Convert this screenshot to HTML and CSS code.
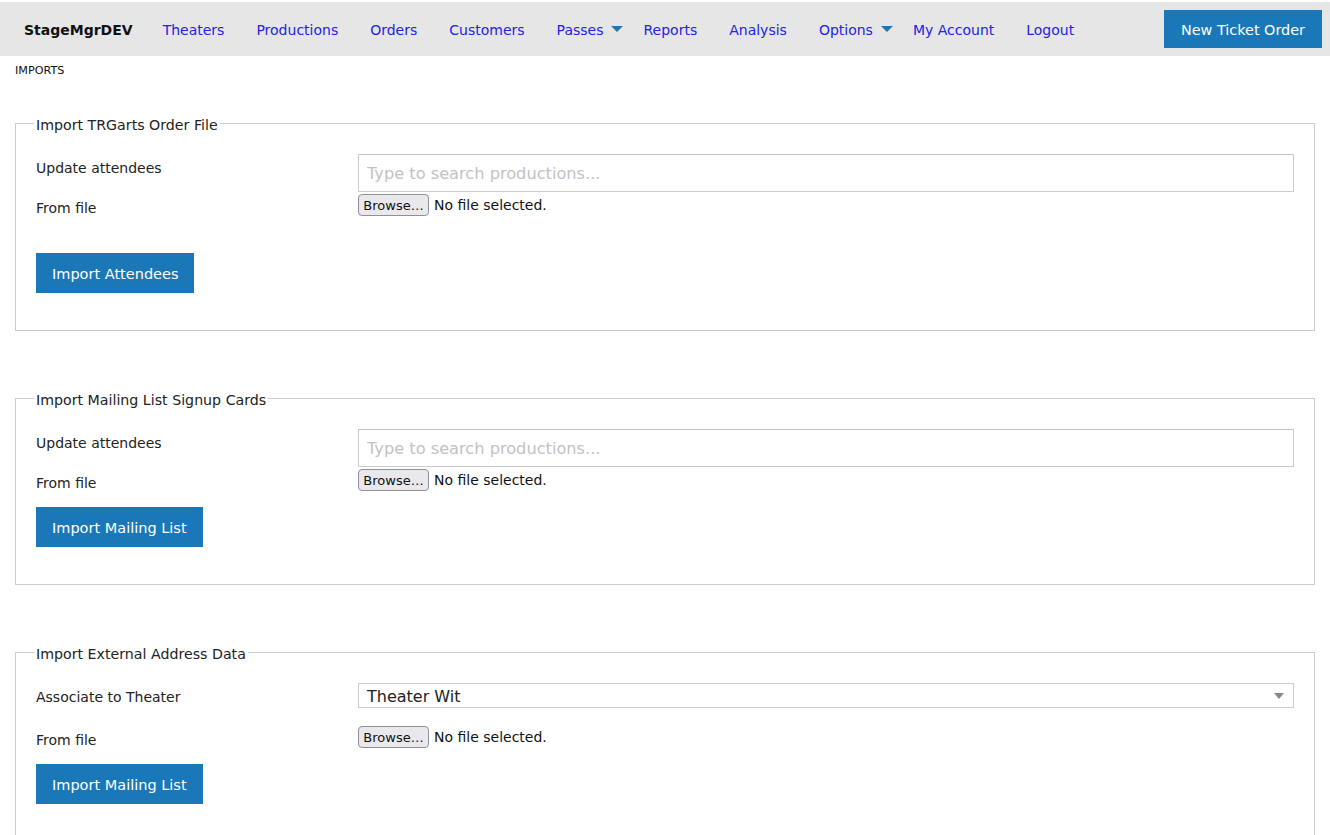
FILE: index.html
```html
<!DOCTYPE html>
<html lang="en">
<head>
  <meta charset="UTF-8" />
  <meta name="viewport" content="width=device-width, initial-scale=1.0" />
  <title>StageMgrDEV - Imports</title>
  <link rel="stylesheet" href="styles.css">
</head>
<body>
  <nav class="topbar">
    <a class="brand" href="#">StageMgrDEV</a>
    <a class="nav-link" href="#">Theaters</a>
    <a class="nav-link" href="#">Productions</a>
    <a class="nav-link" href="#">Orders</a>
    <a class="nav-link" href="#">Customers</a>
    <a class="nav-link dropdown" href="#">Passes<span class="caret"></span></a>
    <a class="nav-link" href="#">Reports</a>
    <a class="nav-link" href="#">Analysis</a>
    <a class="nav-link dropdown" href="#">Options<span class="caret"></span></a>
    <a class="nav-link" href="#">My Account</a>
    <a class="nav-link" href="#">Logout</a>
    <a class="btn btn-new" href="#">New Ticket Order</a>
  </nav>

  <div class="crumb">IMPORTS</div>

  <fieldset class="import first">
    <legend>Import TRGarts Order File</legend>
    <div class="row row-input">
      <label>Update attendees</label>
      <input type="text" class="text-input" placeholder="Type to search productions..." />
    </div>
    <div class="row">
      <label>From file</label>
      <div class="file"><button type="button" class="browse">Browse…</button><span>No file selected.</span></div>
    </div>
    <div class="spacer"></div>
    <button type="button" class="btn btn-import">Import Attendees</button>
  </fieldset>

  <fieldset class="import">
    <legend>Import Mailing List Signup Cards</legend>
    <div class="row row-input">
      <label>Update attendees</label>
      <input type="text" class="text-input" placeholder="Type to search productions..." />
    </div>
    <div class="row">
      <label>From file</label>
      <div class="file"><button type="button" class="browse">Browse…</button><span>No file selected.</span></div>
    </div>
    <button type="button" class="btn btn-import">Import Mailing List</button>
  </fieldset>

  <fieldset class="import">
    <legend>Import External Address Data</legend>
    <div class="row row-select">
      <label>Associate to Theater</label>
      <div class="select">
        <span>Theater Wit</span>
        <svg width="10" height="6" viewBox="0 0 10 6"><path d="M0 0h10L5 6z" fill="#888"/></svg>
      </div>
    </div>
    <div class="row">
      <label>From file</label>
      <div class="file"><button type="button" class="browse">Browse…</button><span>No file selected.</span></div>
    </div>
    <button type="button" class="btn btn-import">Import Mailing List</button>
  </fieldset>
</body>
</html>
```

FILE: styles.css
```css
body {
  margin: 0;
  padding-top: 2px;
  font-family: "DejaVu Sans", Verdana, sans-serif;
  color: #222;
  background: #fff;
}
.topbar {
  display: flex;
  align-items: center;
  height: 54px;
  padding-left: 8px;
  background-color: #e6e6e6;
}
.brand {
  padding: 2px 14px 0 16px;
  font-size: 14px;
  font-weight: bold;
  color: #111;
  text-decoration: none;
}
.nav-link {
  display: flex;
  align-items: center;
  padding: 2px 16px 0;
  font-size: 14px;
  color: #2222e0;
  text-decoration: none;
}
.nav-link.dropdown {
  padding-right: 4px;
}
.caret {
  width: 0;
  height: 0;
  margin-left: 8px;
  margin-top: -3px;
  border-left: 6px solid transparent;
  border-right: 6px solid transparent;
  border-top: 6px solid #1a78b8;
}
.btn {
  display: inline-block;
  border: none;
  background-color: #1a78b8;
  color: #fff;
  font-family: "DejaVu Sans", Verdana, sans-serif;
  text-decoration: none;
  cursor: pointer;
}
.btn-new {
  margin-left: auto;
  margin-right: 8px;
  height: 38px;
  line-height: 40px;
  padding: 0 17px;
  font-size: 14.4px;
}
.crumb {
  padding: 8px 15px;
  font-size: 11.2px;
  line-height: 13px;
  color: #111;
}
fieldset.import {
  margin: 0 15px 57px;
  padding: 20px 20px 20px;
  border: 1px solid #ccc;
}
fieldset.first {
  margin-top: 28px;
}
legend {
  margin-left: -2px;
  padding: 4px 2px 0;
  font-size: 14.2px;
  line-height: 17px;
  color: #222;
}
.row {
  display: grid;
  grid-template-columns: 322px 1fr;
  align-items: start;
  min-height: 38px;
}
.row-input {
  min-height: 40px;
}
.row-select {
  min-height: 43px;
}
.row label {
  padding-top: 6px;
  font-size: 14px;
  line-height: 16px;
  color: #222;
}
.text-input {
  box-sizing: border-box;
  width: 100%;
  height: 38px;
  margin: 0;
  padding: 0 8px;
  border: 1px solid #ccc;
  border-top-color: #c4c4c4;
  font-family: "DejaVu Sans", Verdana, sans-serif;
  font-size: 16.2px;
  color: #222;
  outline: none;
}
.text-input::placeholder {
  color: #c2c2c2;
}
.select {
  box-sizing: border-box;
  display: flex;
  align-items: center;
  justify-content: space-between;
  height: 25px;
  padding: 1px 9px 0 8px;
  border: 1px solid #ccc;
  font-size: 16px;
  color: #222;
}
.file {
  display: flex;
  align-items: center;
  gap: 5px;
  font-size: 14px;
  color: #111;
}
.browse {
  box-sizing: border-box;
  height: 22px;
  width: 71px;
  padding: 0;
  border: 1px solid #8f8f9d;
  border-radius: 4px;
  background-color: #e9e9ed;
  font-family: "DejaVu Sans", Verdana, sans-serif;
  font-size: 13px;
  color: #111;
}
.spacer {
  height: 21px;
}
.btn-import {
  height: 40px;
  margin-bottom: 17px;
  padding: 1px 16px 0;
  font-size: 14.5px;
}
```
